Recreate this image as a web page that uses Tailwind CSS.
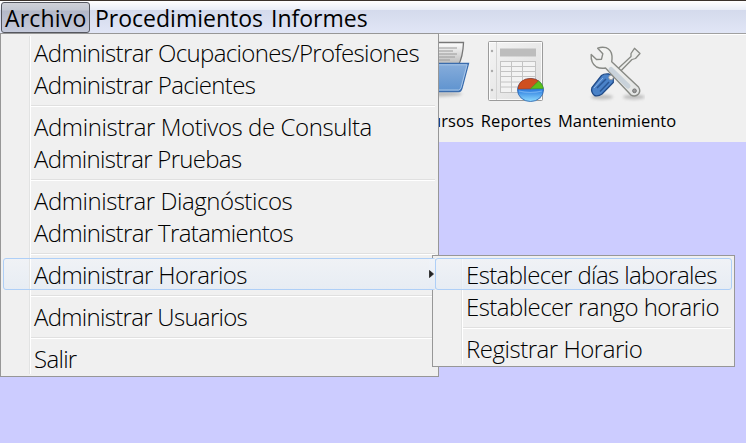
<!DOCTYPE html>
<html lang="es">
<head>
<meta charset="utf-8">
<title>Archivo</title>
<script src="https://cdn.jsdelivr.net/npm/@tailwindcss/browser@4"></script>
</head>
<body class="w-[746px] h-[443px] overflow-hidden bg-[#ccccff] text-black font-['Open_Sans','Noto_Sans',sans-serif]">
<div class="relative w-[746px] h-[443px] overflow-hidden flex flex-col">
  <!-- Menu bar -->
  <nav class="h-[34px] shrink-0 flex border-t border-t-[#3a322c] border-b border-b-[#a0a0a0] pt-px pl-px text-[23px] leading-[31px] whitespace-nowrap bg-[linear-gradient(to_bottom,#ffffff_0px,#e9edf7_9px,#d4daec_9px,#e1e6f6_32px)]">
    <div class="w-[89px] h-[31px] rounded-[3px] border border-[#55575f] pl-[3px] leading-[31px] bg-[linear-gradient(to_bottom,#d0d2d8_0px,#c3c7d2_7px,#b3b8c8_8px,#c6cbdc_30px)]"><span class="tracking-[0.2px]">Archivo</span></div>
    <div class="w-[176px] pl-[5px] leading-[33px]"><span>Procedimientos</span></div>
    <div class="pl-[5px] leading-[33px]"><span>Informes</span></div>
  </nav>
  <!-- Toolbar -->
  <section class="h-[108px] shrink-0 bg-[#f0f0f0] border-t border-t-white flex text-[16.5px] leading-[22px] whitespace-nowrap">
    <div class="w-[478px] flex flex-col items-end pr-1">
      <svg class="mt-[5px] mr-[4px]" width="60" height="62" viewBox="0 0 60 62">
        <defs>
          <linearGradient id="fold" x1="0" y1="0" x2="0" y2="1"><stop offset="0" stop-color="#87addb"/><stop offset="1" stop-color="#5e93cf"/></linearGradient>
          <linearGradient id="pap" x1="0" y1="0" x2="0" y2="1"><stop offset="0" stop-color="#fff"/><stop offset="1" stop-color="#b5b5b5"/></linearGradient>
          <filter id="soft" x="-30%" y="-100%" width="160%" height="300%"><feGaussianBlur stdDeviation="1.5"/></filter>
        </defs>
        <ellipse cx="28" cy="54" rx="24" ry="2.500" fill="#888" opacity=".5" filter="url(#soft)"/>
        <path d="M2 2.500H53.500Q53 17 48 26H2Z" fill="url(#pap)" stroke="#777" stroke-width="1.300"/>
        <path d="M10 8H47M10 11H43M10 14H47M10 17H45M10 20H40" stroke="#9a9a9a" stroke-width="1"/>
        <path d="M2 23.500H58.500L52 48Q51 51.500 49 51.500H2Z" fill="url(#fold)" stroke="#3a6cad" stroke-width="1.300"/>
        <path d="M2 24.800H57L51 47.500Q50 50 48.500 50H2" fill="none" stroke="#a9c6e8" stroke-width="1"/>
      </svg>
      <span class="mt-[8px] tracking-[0.1px]">Recursos</span>
    </div>
    <div class="w-[76px] flex flex-col items-center">
      <svg class="mt-[5px]" width="60" height="62" viewBox="0 0 60 62">
        <defs>
          <linearGradient id="sheet" x1="0" y1="0" x2="1" y2="1"><stop offset="0" stop-color="#f4f4f4"/><stop offset="1" stop-color="#dedede"/></linearGradient>
          <linearGradient id="pie" x1="0" y1="0" x2="0" y2="1"><stop offset="0" stop-color="#1d5fc4"/><stop offset=".5" stop-color="#2f7fe0"/><stop offset="1" stop-color="#8fdcff"/></linearGradient>
        </defs>
        <rect x="2.500" y="1.500" width="54" height="59" rx="1" fill="url(#sheet)" stroke="#9b9b9b"/>
        <rect x="3.500" y="2.500" width="52" height="57" fill="none" stroke="#fff" opacity=".8"/>
        <path d="M10.500 2V60" stroke="#d5d5d5"/>
        <g fill="#aaa"><circle cx="6" cy="11" r="1.200"/><circle cx="6" cy="31" r="1.200"/><circle cx="6" cy="50" r="1.200"/></g>
        <rect x="14" y="8.500" width="36" height="8" fill="#bdbdbd"/>
        <rect x="14.500" y="21.500" width="35" height="31" fill="#f3f3f3" stroke="#c4c4c4"/>
        <path d="M14 26.500H50M14 31.500H50M14 36.500H50M14 42H50M14 47H50M25.500 21V53M36.500 21V53" stroke="#c4c4c4"/>
        <ellipse cx="44.500" cy="50" rx="13" ry="11.500" fill="url(#pie)" stroke="#2a5ea8" stroke-width=".8"/>
        <path d="M32 49Q33 38.500 45 38.500Q50 38.700 52.500 41L44.500 48.800Z" fill="#cf4f20" stroke="#a93a12" stroke-width=".6"/>
        <path d="M52.500 41Q57 44 57.300 48.500L44.500 48.800Z" fill="#5cc01c" stroke="#459a18" stroke-width=".6"/>
        <path d="M33 51Q44 54 56 51" fill="none" stroke="#7db8f5" stroke-width="1.200" opacity=".8"/>
      </svg>
      <span class="mt-[8px] tracking-[0.15px]">Reportes</span>
    </div>
    <div class="w-[126px] flex flex-col items-center">
      <svg class="mt-[5px] mr-[4px]" width="60" height="62" viewBox="585 40 60 62">
        <defs>
          <linearGradient id="steel" x1="0" y1="0" x2="1" y2="1"><stop offset="0" stop-color="#f6f6f4"/><stop offset="1" stop-color="#e2e4e3"/></linearGradient>
        </defs>
        <ellipse cx="602" cy="97" rx="11" ry="2.500" fill="#777" opacity=".4" filter="url(#soft)"/>
        <ellipse cx="634" cy="97" rx="11" ry="2.500" fill="#777" opacity=".4" filter="url(#soft)"/>
        <path d="M608 78L631 56.500V53.500L634.500 48.300L640 53.500L635.500 58.500L632 59.500L611 81Z" fill="#ecedeb" stroke="#888a85" stroke-width="1.300" stroke-linejoin="round"/>
        <path d="M601.500 75.500Q604 73.500 609 74Q614 76 613.300 82.500L602 94Q598.500 96.500 594.500 95.500Q590.500 92 592 87.500Z" fill="#4a82c8" stroke="#204a87" stroke-width="1.300"/>
        <path d="M597 88L606 79M600 91.500L609 82" stroke="#2a5796" stroke-width="1.500"/>
        <path d="M594 88L603 78" stroke="#8fb5e6" stroke-width="1"/>
        <circle cx="611" cy="77.500" r="2.300" fill="#eee" stroke="#999" stroke-width=".8"/>
        <path d="M597.700 48.200Q602 46.500 606 47.700Q611.500 50 612 56Q612.200 59 611.700 61.700L638.500 87Q641 91 638.500 94Q635 97.500 630.700 94.800L605.500 68Q600.500 68.800 596.500 67Q590.500 63 591.200 54.500L596.500 59.500L601.500 59.200L602.800 53.800Z" fill="url(#steel)" stroke="#888a85" stroke-width="1.400" stroke-linejoin="round"/>
        <path d="M611 69.500L628 86" stroke="#c9d2da" stroke-width="5" stroke-linecap="round"/>
        <circle cx="634.500" cy="90.800" r="1.900" fill="#999" stroke="#666" stroke-width=".8"/>
      </svg>
      <span class="mt-[8px]">Mantenimiento</span>
    </div>
  </section>

  <!-- Archivo menu -->
  <div class="absolute left-0 top-[33px] w-[439px] h-[344px] bg-[#f0f0f0] border border-[#979797] py-[2px] text-[24px] font-light leading-[34px] whitespace-nowrap">
    <div class="absolute left-[28px] top-[2px] bottom-[2px] w-[2px] bg-[#e2e3e3] border-r border-white"></div>
    <div class="h-8 pl-[33px]"><span class="tracking-[-0.64px]">Administrar Ocupaciones/Profesiones</span></div>
    <div class="h-8 pl-[33px]"><span class="tracking-[-0.66px]">Administrar Pacientes</span></div>
    <div class="h-[2px] mt-[5px] mb-[3px] ml-[30px] mr-[3px] bg-[#e0e0e0] border-b border-white"></div>
    <div class="h-8 pl-[33px]"><span class="tracking-[-0.42px]">Administrar Motivos de Consulta</span></div>
    <div class="h-8 pl-[33px]"><span class="tracking-[-0.7px]">Administrar Pruebas</span></div>
    <div class="h-[2px] mt-[5px] mb-[3px] ml-[30px] mr-[3px] bg-[#e0e0e0] border-b border-white"></div>
    <div class="h-8 pl-[33px]"><span class="tracking-[-0.44px]">Administrar Diagnósticos</span></div>
    <div class="h-8 pl-[33px]"><span class="tracking-[-0.64px]">Administrar Tratamientos</span></div>
    <div class="h-[2px] mt-[5px] mb-[3px] ml-[30px] mr-[3px] bg-[#e0e0e0] border-b border-white"></div>
    <div class="h-8 ml-[2px] -mr-px pl-[31px] rounded-l-[3px] bg-linear-to-b from-[#f0f3f8]/70 to-[#e3ebf5]/70"><span class="tracking-[-0.62px]">Administrar Horarios</span></div>
    <div class="h-[2px] mt-[5px] mb-[3px] ml-[30px] mr-[3px] bg-[#e0e0e0] border-b border-white"></div>
    <div class="h-8 pl-[33px]"><span class="tracking-[-0.7px]">Administrar Usuarios</span></div>
    <div class="h-[2px] mt-[5px] mb-[3px] ml-[30px] mr-[3px] bg-[#e0e0e0] border-b border-white"></div>
    <div class="h-8 pl-[33px]"><span class="tracking-[-0.7px]">Salir</span></div>
  </div>

  <!-- Horarios submenu -->
  <div class="absolute left-[432px] top-[255px] w-[303px] h-[112px] bg-[#f0f0f0] border border-[#979797] py-[2px] text-[24px] font-light leading-[34px] whitespace-nowrap">
    <div class="absolute left-[28px] top-[2px] bottom-[2px] w-[2px] bg-[#e2e3e3] border-r border-white"></div>
    <div class="relative h-8 ml-[2px] mr-[2px] pl-[30px] rounded-[3px] border border-[#aecff7] bg-linear-to-b from-[#f0f3f8]/70 to-[#e3ebf5]/70 leading-[32px]"><span class="tracking-[-0.62px]">Establecer días laborales</span></div>
    <div class="h-8 pl-[33px]"><span class="tracking-[-0.56px]">Establecer rango horario</span></div>
    <div class="h-[2px] mt-[5px] mb-[3px] ml-[30px] mr-[3px] bg-[#e0e0e0] border-b border-white"></div>
    <div class="h-8 pl-[33px]"><span class="tracking-[-0.47px]">Registrar Horario</span></div>
  </div>

  <!-- Selection frame of the open item, reaching the submenu -->
  <div class="absolute left-[3px] top-[258px] w-[433px] h-8 rounded-[3px] border border-[#aecff7] flex justify-end">
    <div class="w-[6px] h-full flex items-center bg-linear-to-b from-[#f0f3f8] to-[#e6ecf4]">
      <svg class="mt-[-1px]" width="5" height="8" viewBox="0 0 5 8"><path d="M0.500 0.500L4.500 4L0.500 7.500Z" fill="#222" stroke="#222" stroke-width=".8"/></svg>
    </div>
  </div>
</div>
</body>
</html>
